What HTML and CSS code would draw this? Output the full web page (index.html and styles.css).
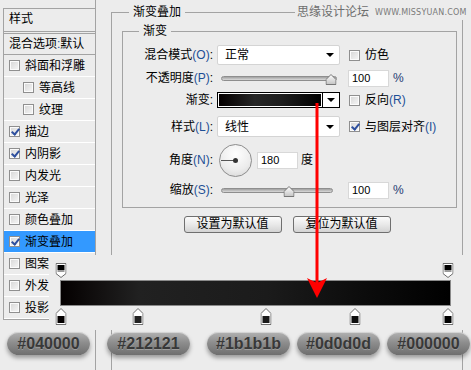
FILE: index.html
```html
<!DOCTYPE html>
<html lang="zh-CN">
<head>
    <meta charset="UTF-8">
    <meta name="viewport" content="width=device-width, initial-scale=1.0">
    <title>渐变叠加</title>
    <link rel="stylesheet" href="styles.css">
</head>
<body>

    <div class="dialog">
        <!-- lista de estilos à esquerda -->
        <aside class="sidebar">
            <ul class="style-list">
                <li class="head">样式</li>
                <li class="blend">混合选项<span class="key">:</span>默认</li>
                <li class="item"><span class="check"></span>斜面和浮雕</li>
                <li class="item sub"><span class="check"></span>等高线</li>
                <li class="item sub"><span class="check"></span>纹理</li>
                <li class="item"><span class="check on"></span>描边</li>
                <li class="item"><span class="check on"></span>内阴影</li>
                <li class="item"><span class="check"></span>内发光</li>
                <li class="item"><span class="check"></span>光泽</li>
                <li class="item"><span class="check"></span>颜色叠加</li>
                <li class="item active"><span class="check on"></span>渐变叠加</li>
                <li class="item"><span class="check"></span>图案</li>
                <li class="item"><span class="check"></span>外发</li>
                <li class="item"><span class="check"></span>投影</li>
            </ul>
        </aside>

        <main class="panel">
            <fieldset class="group outer">
                <legend>渐变叠加</legend>
                <fieldset class="group inner">
                    <legend>渐变</legend>

                    <div class="row r-blend">
                        <span class="lbl">混合模式<span class="key">(O)</span>:</span>
                        <div class="select">正常<i class="caret"></i></div>
                        <span class="opt"><span class="check"></span>仿色</span>
                    </div>

                    <div class="row r-opacity">
                        <span class="lbl">不透明度<span class="key">(P)</span>:</span>
                        <div class="slider">
                            <div class="track">
                                <svg class="thumb" style="left: 95.7%" width="11" height="11" viewBox="0 0 11 11">
                                    <defs><linearGradient id="tg1" x1="0" y1="0" x2="0" y2="1"><stop offset="0" stop-color="#fff"/><stop offset="1" stop-color="#c4c4c4"/></linearGradient></defs>
                                    <path d="M0.5 10.5V5.5L5.5 0.5L10.5 5.5V10.5Z" fill="url(#tg1)" stroke="#777"/>
                                </svg>
                            </div>
                        </div>
                        <div class="num">100</div>
                        <span class="unit">%</span>
                    </div>

                    <div class="row r-gradient">
                        <span class="lbl">渐变:</span>
                        <div class="grad-field">
                            <div class="grad-swatch"><div class="grad-fill"></div></div>
                            <div class="grad-btn"><i class="caret"></i></div>
                        </div>
                        <span class="opt"><span class="check"></span>反向<span class="key">(R)</span></span>
                    </div>

                    <div class="row r-style">
                        <span class="lbl">样式<span class="key">(L)</span>:</span>
                        <div class="select tall">线性<i class="caret"></i></div>
                        <span class="opt"><span class="check on"></span>与图层对齐<span class="key">(I)</span></span>
                    </div>

                    <div class="row r-angle">
                        <span class="lbl">角度<span class="key">(N)</span>:</span>
                        <div class="dial"></div>
                        <div class="num angle">180</div>
                        <span class="unit plain">度</span>
                    </div>

                    <div class="row r-scale">
                        <span class="lbl">缩放<span class="key">(S)</span>:</span>
                        <div class="slider">
                            <div class="track short">
                                <svg class="thumb" style="left: 61%" width="11" height="11" viewBox="0 0 11 11">
                                    <defs><linearGradient id="tg2" x1="0" y1="0" x2="0" y2="1"><stop offset="0" stop-color="#fff"/><stop offset="1" stop-color="#c4c4c4"/></linearGradient></defs>
                                    <path d="M0.5 10.5V5.5L5.5 0.5L10.5 5.5V10.5Z" fill="url(#tg2)" stroke="#777"/>
                                </svg>
                            </div>
                        </div>
                        <div class="num">100</div>
                        <span class="unit">%</span>
                    </div>
                </fieldset>

                <div class="buttons">
                    <button class="btn">设置为默认值</button>
                    <button class="btn">复位为默认值</button>
                </div>
            </fieldset>
        </main>
    </div>

    <div class="watermark">思缘设计论坛<span class="site">WWW.MISSYUAN.COM</span></div>

    <!-- editor de gradiente ampliado, por cima do diálogo -->
    <div class="annot">
        <div class="editor">
            <div class="rail">
                <svg class="stop" style="left: 0%" width="11" height="15" viewBox="0 0 11 15">
                    <path d="M0.5 0.5H10.5V10.5L5.5 14.5L0.5 10.5Z" fill="#fff" stroke="#6d6d6d"/>
                    <rect x="2" y="2" width="7" height="5" fill="#000"/>
                    <rect x="2" y="7" width="7" height="2" fill="#9a9a9a"/>
                </svg>
                <svg class="stop" style="left: 100%" width="11" height="15" viewBox="0 0 11 15">
                    <path d="M0.5 0.5H10.5V10.5L5.5 14.5L0.5 10.5Z" fill="#fff" stroke="#6d6d6d"/>
                    <rect x="2" y="2" width="7" height="5" fill="#000"/>
                    <rect x="2" y="7" width="7" height="2" fill="#9a9a9a"/>
                </svg>
            </div>
            <div class="bar"></div>
            <div class="rail bottom">
                <svg class="stop" style="left: 0%" width="11" height="17" viewBox="0 0 11 17">
                    <path d="M5.5 0.5L10.5 5.5V16.5H0.5V5.5Z" fill="#fff" stroke="#6d6d6d"/>
                    <rect x="2" y="8" width="7" height="7" fill="#040000"/>
                </svg>
                <svg class="stop" style="left: 20%" width="11" height="17" viewBox="0 0 11 17">
                    <path d="M5.5 0.5L10.5 5.5V16.5H0.5V5.5Z" fill="#fff" stroke="#6d6d6d"/>
                    <rect x="2" y="8" width="7" height="7" fill="#212121"/>
                </svg>
                <svg class="stop" style="left: 53%" width="11" height="17" viewBox="0 0 11 17">
                    <path d="M5.5 0.5L10.5 5.5V16.5H0.5V5.5Z" fill="#fff" stroke="#6d6d6d"/>
                    <rect x="2" y="8" width="7" height="7" fill="#1b1b1b"/>
                </svg>
                <svg class="stop" style="left: 76%" width="11" height="17" viewBox="0 0 11 17">
                    <path d="M5.5 0.5L10.5 5.5V16.5H0.5V5.5Z" fill="#fff" stroke="#6d6d6d"/>
                    <rect x="2" y="8" width="7" height="7" fill="#0d0d0d"/>
                </svg>
                <svg class="stop" style="left: 100%" width="11" height="17" viewBox="0 0 11 17">
                    <path d="M5.5 0.5L10.5 5.5V16.5H0.5V5.5Z" fill="#fff" stroke="#6d6d6d"/>
                    <rect x="2" y="8" width="7" height="7" fill="#000000"/>
                </svg>
            </div>
        </div>

        <div class="swatches">
            <span class="swatch">#040000</span>
            <span class="swatch">#212121</span>
            <span class="swatch">#1b1b1b</span>
            <span class="swatch near">#0d0d0d</span>
            <span class="swatch near">#000000</span>
        </div>
    </div>

    <svg class="arrow" width="22" height="200" viewBox="0 0 22 200">
        <rect x="9.5" y="3" width="3" height="180" fill="#ff0000"/>
        <path d="M1 178L11 183L21 178L11 198Z" fill="#ff0000"/>
    </svg>

</body>
</html>
```

FILE: styles.css
```css
* {
    box-sizing: border-box;
}
body {
    margin: 0;
    width: 471px;
    height: 370px;
    overflow: hidden;
    position: relative;
    background: #ececec;
    font-family: "Liberation Sans", "Noto Sans CJK SC", sans-serif;
    font-size: 12px;
    line-height: 14px;
    color: #000;
}
.dialog {
    display: flex;
    height: 370px;
}

/* lista lateral */
.sidebar {
    flex: none;
    width: 93px;
    margin-left: 3px;
    border-right: 1px solid #a3a3a3;
}
.style-list {
    list-style: none;
    margin: 8px 0 0;
    padding: 0;
    border: 1px solid #a3a3a3;
    border-right: 0;
}
.style-list li {
    display: flex;
    align-items: center;
    white-space: nowrap;
    overflow: hidden;
}
.head {
    height: 25px;
    padding: 0 0 2px 5px;
    border-bottom: 3px double #a3a3a3;
}
.blend {
    height: 21px;
    padding-left: 5px;
    border-bottom: 1px solid #a3a3a3;
}
.item {
    height: 22px;
    padding-left: 5px;
    border-bottom: 1px solid #fff;
}
.item.sub {
    padding-left: 19px;
}
.item.active {
    background: #3399ff;
}
.key {
    color: #1d4f96;
}

.check {
    flex: none;
    position: relative;
    width: 11px;
    height: 11px;
    margin-right: 5px;
    border: 1px solid #8f8f8f;
    background: linear-gradient(135deg, #d6d6d6, #f7f7f7);
    box-shadow: inset 0 0 0 1px #fbfbfb;
}
.check.on::after {
    content: "";
    position: absolute;
    left: 3px;
    top: 0;
    width: 3px;
    height: 6px;
    border: solid #2d4f9e;
    border-width: 0 2px 2px 0;
    transform: rotate(40deg);
}

/* painel principal */
.panel {
    flex: 1;
}
.group {
    margin: 0;
    padding: 0;
    min-width: 0;
    border: 1px solid #a3a3a3;
}
.group legend {
    padding: 0 4px;
    font-size: 12px;
    line-height: 14px;
}
.outer {
    width: 352px;
    height: 365px;
    margin: 5px 0 0 15px;
    padding: 5px 5px 0 10px;
    border-bottom: 0;
}
.outer > legend {
    margin-left: 7px;
}
.inner {
    width: 335px;
    padding: 6px 0 4px;
}
.inner > legend {
    margin-left: 16px;
}

.row {
    display: flex;
    align-items: center;
}
.r-blend { height: 22px; }
.r-opacity { height: 24px; }
.r-gradient { height: 20px; }
.r-style { height: 33px; }
.r-angle { height: 34px; }
.r-scale { height: 26px; }

.lbl {
    flex: none;
    width: 90px;
    margin-right: 4px;
    text-align: right;
    white-space: nowrap;
}
.select {
    flex: none;
    display: flex;
    align-items: center;
    justify-content: space-between;
    width: 123px;
    height: 20px;
    padding: 0 5px 0 7px;
    background: #fff;
    border: 1px solid #d4d4d4;
    border-radius: 2px;
}
.select.tall {
    height: 21px;
}
.caret {
    width: 0;
    height: 0;
    border-left: 4px solid transparent;
    border-right: 4px solid transparent;
    border-top: 4px solid #000;
}
.opt {
    display: flex;
    align-items: center;
    margin-left: 9px;
    white-space: nowrap;
}

.slider {
    flex: none;
    width: 120px;
    padding-left: 4px;
}
.track {
    position: relative;
    width: 116px;
    height: 5px;
    border: 1px solid #8e8e8e;
    border-radius: 3px;
    background: linear-gradient(#a0a0a0, #dadada);
}
.track.short {
    width: 112px;
}
.thumb {
    position: absolute;
    top: -3px;
    transform: translateX(-50%);
    display: block;
}
.num {
    flex: none;
    width: 41px;
    height: 17px;
    margin-left: 11px;
    padding-left: 3px;
    background: #fff;
    border: 1px solid #d8d8d8;
    font-size: 11px;
    line-height: 15px;
}
.num.angle {
    margin-left: 5px;
}
.unit {
    margin-left: 4px;
    color: #1d3b73;
}
.unit.plain {
    margin-left: 3px;
    color: #000;
}

.grad-field {
    flex: none;
    display: flex;
    width: 123px;
    height: 16px;
}
.grad-swatch {
    flex: 1;
    padding: 1px;
    background: #fff;
    border: 1px solid #000;
    border-right: 0;
}
.grad-fill {
    height: 100%;
    background: linear-gradient(90deg, #050000, #262626 35%, #1d1d1d 60%, #0b0b0b 85%, #000);
}
.grad-btn {
    display: flex;
    align-items: center;
    justify-content: center;
    width: 18px;
    background: #fff;
    border: 1px solid #000;
}

.dial {
    flex: none;
    position: relative;
    width: 33px;
    height: 33px;
    margin-left: 2px;
    border: 1px solid #8d8d8d;
    border-radius: 50%;
    background: radial-gradient(circle at 50% 30%, #fff, #ececec 60%, #d2d2d2);
}
.dial::before {
    content: "";
    position: absolute;
    left: 1px;
    top: 15px;
    width: 15px;
    height: 1px;
    background: #555;
}
.dial::after {
    content: "";
    position: absolute;
    left: 13px;
    top: 13px;
    width: 5px;
    height: 5px;
    border-radius: 50%;
    background: #333;
}

.buttons {
    display: flex;
    justify-content: center;
    gap: 11px;
    margin-top: 8px;
    padding-right: 5px;
}
.btn {
    width: 98px;
    height: 17px;
    padding: 0;
    border: 1px solid #6f6f6f;
    border-radius: 3px;
    background: linear-gradient(#fbfbfb, #e9e9e9 50%, #d3d3d3);
    font: inherit;
    line-height: 15px;
    color: #000;
}

/* marca d'água */
.watermark {
    position: absolute;
    left: 295px;
    top: 5px;
    display: flex;
    align-items: center;
    padding: 0 2px;
    background: #ececec;
    color: #6e6e6e;
    font-size: 12px;
    line-height: 15px;
}
.site {
    margin-left: 6px;
    font-family: "DejaVu Sans", sans-serif;
    font-size: 8px;
    letter-spacing: 0.2px;
    color: #7a7a7a;
}

/* editor de gradiente ampliado */
.annot {
    position: absolute;
    left: 0;
    top: 255px;
    width: 471px;
}
.editor {
    height: 75px;
    margin-left: 49px;
    padding: 8px 0 0 11px;
    background: #ececec;
}
.rail {
    position: relative;
    width: 387px;
    height: 15px;
    margin-left: 1px;
}
.rail.bottom {
    height: 17px;
    margin-top: 2px;
}
.stop {
    position: absolute;
    top: 0;
    display: block;
    transform: translateX(-50%);
}
.bar {
    width: 391px;
    height: 26px;
    margin-top: 2px;
    border: 1px solid #8a8a8a;
    background: linear-gradient(90deg, #040000, #212121 20%, #1b1b1b 53%, #0d0d0d 76%, #000);
}

.swatches {
    display: flex;
    margin-top: 2px;
    padding-left: 7px;
}
.swatch {
    display: flex;
    align-items: center;
    justify-content: center;
    width: 83px;
    height: 23px;
    border-radius: 12px;
    background: linear-gradient(#b2b2b2, #8e8e8e 45%, #6e6e6e);
    box-shadow: 0 3px 4px rgba(0, 0, 0, 0.35), inset 0 1px 0 rgba(255, 255, 255, 0.45);
    font-weight: bold;
    font-size: 16px;
    color: #383838;
    text-shadow: 0 1px 0 rgba(255, 255, 255, 0.25);
}
.swatch + .swatch {
    margin-left: 17px;
}
.swatch.near {
    margin-left: 7px;
}

.arrow {
    position: absolute;
    left: 306px;
    top: 100px;
}
```
